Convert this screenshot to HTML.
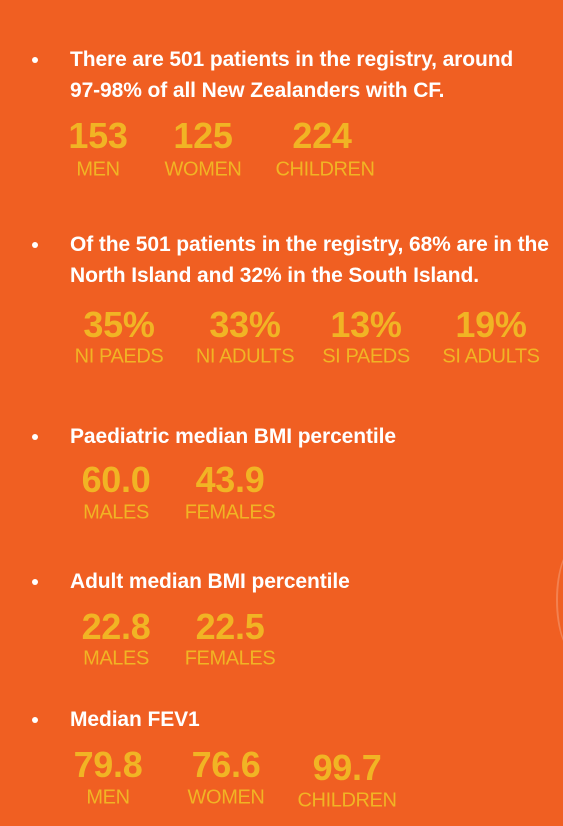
<!DOCTYPE html>
<html><head><meta charset="utf-8"><style>
html,body{margin:0;padding:0}
body{width:563px;height:826px;background:#F05F22;position:relative;overflow:hidden;font-family:"Liberation Sans",sans-serif}
.t{position:absolute;left:70px;color:#fff;font-weight:bold;font-size:21px;letter-spacing:-0.1px;white-space:nowrap;line-height:31px}
.b{position:absolute;left:32px;width:6px;height:6px;border-radius:50%;background:#fff}
.n,.l{position:absolute;transform:translate(-50%,-50%);color:#F1B424;white-space:nowrap}
.n{font-weight:bold;font-size:36px;letter-spacing:-0.3px}
.l{font-size:20px;letter-spacing:-0.4px}
.arc{position:absolute;left:556px;top:545px;width:40px;height:110px;border-radius:50%;border-left:2px solid #F38150}
</style></head><body>
<div class="arc"></div>
<div class="b" style="top:57px"></div>
<div class="t" style="top:44px">There are 501 patients in the registry, around<br>97-98% of all New Zealanders with CF.</div>
<div class="n" style="left:98px;top:136px">153</div>
<div class="n" style="left:203px;top:136px">125</div>
<div class="n" style="left:322px;top:136px">224</div>
<div class="l" style="left:98px;top:170px">MEN</div>
<div class="l" style="left:203px;top:170px">WOMEN</div>
<div class="l" style="left:325px;top:170px">CHILDREN</div>

<div class="b" style="top:242px"></div>
<div class="t" style="top:229px">Of the 501 patients in the registry, 68% are in the<br>North Island and 32% in the South Island.</div>
<div class="n" style="left:119px;top:325px">35%</div>
<div class="n" style="left:245px;top:325px">33%</div>
<div class="n" style="left:366px;top:325px">13%</div>
<div class="n" style="left:491px;top:325px">19%</div>
<div class="l" style="left:119px;top:357px">NI PAEDS</div>
<div class="l" style="left:245px;top:357px">NI ADULTS</div>
<div class="l" style="left:366px;top:357px">SI PAEDS</div>
<div class="l" style="left:491px;top:357px">SI ADULTS</div>

<div class="b" style="top:434px"></div>
<div class="t" style="top:421px">Paediatric median BMI percentile</div>
<div class="n" style="left:116px;top:480px">60.0</div>
<div class="n" style="left:230px;top:480px">43.9</div>
<div class="l" style="left:116px;top:513px">MALES</div>
<div class="l" style="left:230px;top:513px">FEMALES</div>

<div class="b" style="top:579px"></div>
<div class="t" style="top:566px">Adult median BMI percentile</div>
<div class="n" style="left:116px;top:627px">22.8</div>
<div class="n" style="left:230px;top:627px">22.5</div>
<div class="l" style="left:116px;top:659px">MALES</div>
<div class="l" style="left:230px;top:659px">FEMALES</div>

<div class="b" style="top:717px"></div>
<div class="t" style="top:704px">Median FEV1</div>
<div class="n" style="left:108px;top:765px">79.8</div>
<div class="n" style="left:226px;top:765px">76.6</div>
<div class="n" style="left:347px;top:768px">99.7</div>
<div class="l" style="left:108px;top:798px">MEN</div>
<div class="l" style="left:226px;top:798px">WOMEN</div>
<div class="l" style="left:347px;top:801px">CHILDREN</div>
</body></html>
